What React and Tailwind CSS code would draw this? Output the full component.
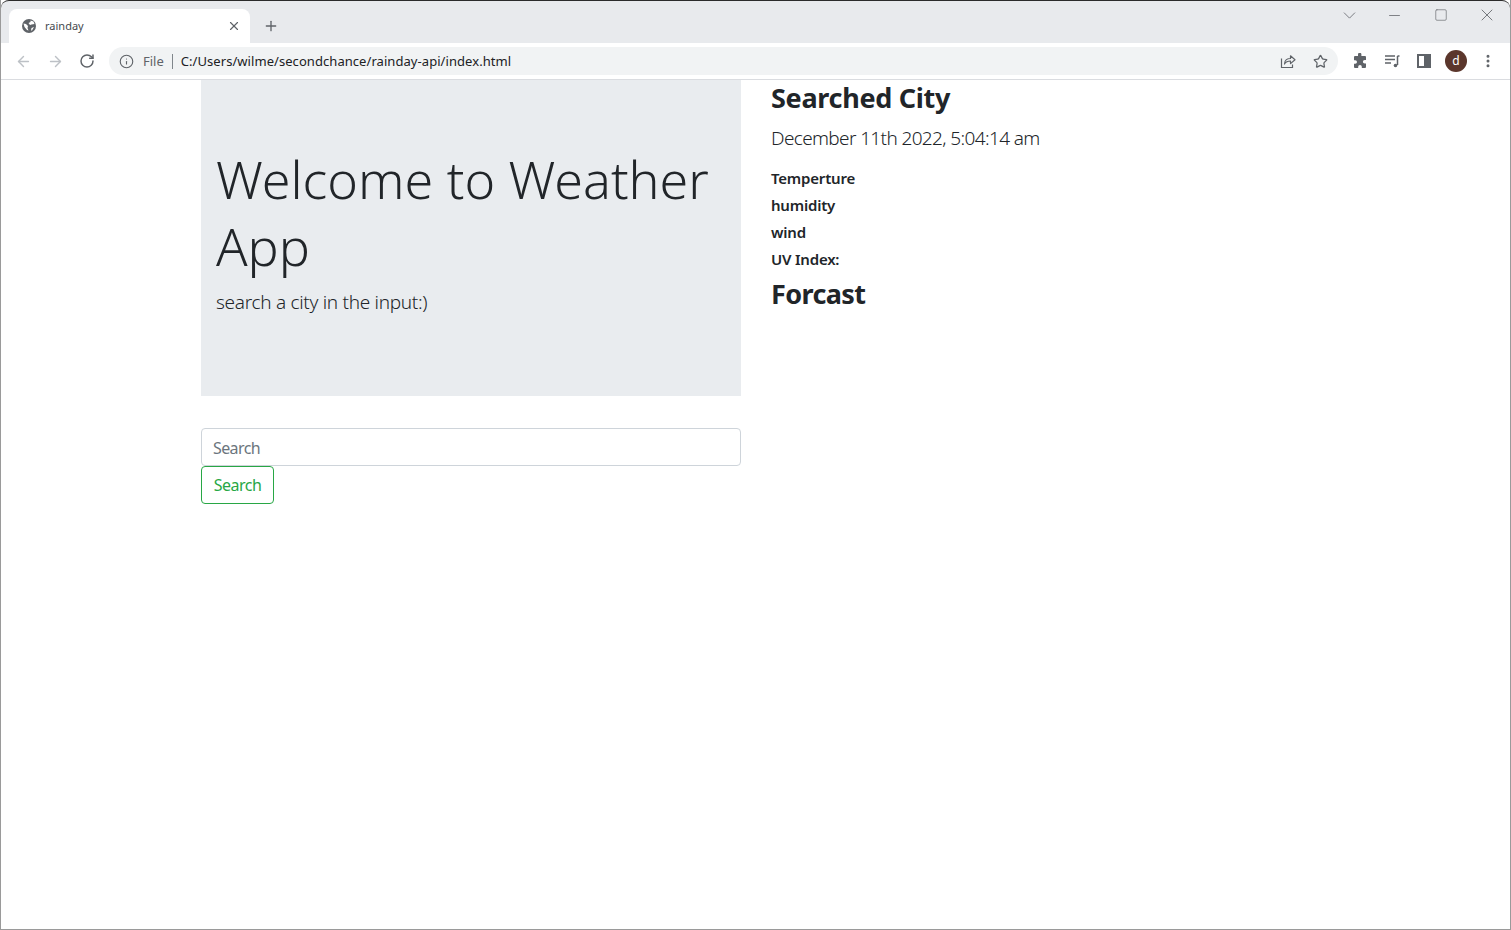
import React from 'react';
import { ArrowLeft, ArrowRight, RotateCw, Info, Star, Plus, X, Minus, Square, ChevronDown, MoreVertical } from 'lucide-react';

const font = { fontFamily: '"Noto Sans", "Open Sans", sans-serif' };

function Globe() {
  return (
    <svg width="16" height="16" viewBox="0 0 16 16" className="shrink-0">
      <circle cx="8" cy="8" r="7" fill="#5f6368" />
      <path d="M2.500 5.500l2.500.5 2 2-.5 2 1 2.500-1.500-.5-2.500-3zM9.500 2.500l3 1 1 2.500-3 .5-1.500.5-1.500-2 2-1zM10.500 10l2.500-1-2 3.500-1 0z" fill="#fff" />
    </svg>
  );
}

function ShareIcon() {
  return (
    <svg width="16" height="16" viewBox="0 0 16 16" fill="none" stroke="#5f6368" strokeWidth="1.200">
      <path d="M1.500 5.500V14.500H12.500V11.500" />
      <path d="M4.500 11c0-3.800 3-5.500 6-5.500V2.800L15 6.700l-4.500 3.900V8c-2.800 0-4.800 1-6 3z" strokeLinejoin="round" />
    </svg>
  );
}

function Puzzle() {
  return (
    <svg width="16" height="16" viewBox="0 0 16 16">
      <path d="M6 1.500a1.700 1.700 0 0 1 3.400 0V3H13a1 1 0 0 1 1 1v3h-1.300a1.800 1.800 0 0 0 0 3.600H14V14a1 1 0 0 1-1 1H9.800v-1.300a1.800 1.800 0 0 0-3.600 0V15H3a1 1 0 0 1-1-1v-3.200h1.200a1.800 1.800 0 0 0 0-3.600H2V4a1 1 0 0 1 1-1h3z" fill="#5f6368" />
    </svg>
  );
}

function MediaQueue() {
  return (
    <svg width="16" height="16" viewBox="0 0 16 16" fill="none" stroke="#5f6368" strokeWidth="1.300">
      <path d="M1 3h10M1 6.500h10M1 10h6" />
      <path d="M13.500 3v9" strokeWidth="1.500" />
      <path d="M13.500 3H15.500" strokeWidth="1.500" />
      <circle cx="11.500" cy="12.500" r="1.800" fill="#5f6368" stroke="none" />
    </svg>
  );
}

function SidePanel() {
  return (
    <div className="w-[14px] h-[14px] border-2 border-[#5f6368] flex justify-end">
      <div className="w-[5px] h-full bg-[#5f6368]" />
    </div>
  );
}

function BrowserChrome() {
  return (
    <div className="shrink-0">
      <div className="h-[43px] bg-[#e8eaed] flex items-end pl-[8px] border-t border-[#2b2b2b] rounded-t-[8px]">
        <div className="w-[241px] h-[34px] bg-white rounded-t-[8px] flex items-center pl-[12px] pr-[9px]">
          <Globe />
          <span className="ml-[8px] text-[11px] text-[#45494e] flex-1 leading-none pb-[2px]" style={font}>rainday</span>
          <X size={14} strokeWidth={2} color="#5f6368" />
        </div>
        <div className="h-[34px] flex items-center ml-[13px]">
          <Plus size={16} strokeWidth={2} color="#5f6368" />
        </div>
        <div className="flex-1 h-[28px] self-start flex justify-end items-center">
          <ChevronDown size={21} strokeWidth={1} className="mr-[26px]" color="#6b6e73" />
          <Minus size={17} strokeWidth={1.200} className="mr-[31px]" color="#6b6e73" />
          <Square size={14} strokeWidth={1.200} className="mr-[29px]" color="#6b6e73" />
          <X size={20} strokeWidth={1.100} className="mr-[13px]" color="#6b6e73" />
        </div>
      </div>
      <div className="h-[37px] bg-white border-b border-[#dadce0] flex items-center pl-[14px] pr-[14px]">
        <ArrowLeft size={17} strokeWidth={2} color="#bdc1c6" />
        <ArrowRight size={17} strokeWidth={2} color="#bdc1c6" className="ml-[15px]" />
        <RotateCw size={16} strokeWidth={2.200} color="#5f6368" className="ml-[15px]" />
        <div className="ml-[14px] w-[1230px] h-[28px] rounded-full bg-[#f1f3f4] flex items-center pl-[10px] pr-[10px]">
          <Info size={15} strokeWidth={1.800} color="#5f6368" />
          <span className="ml-[9px] text-[13px] text-[#5f6368] leading-none" style={font}>File</span>
          <span className="ml-[8px] w-px h-[15px] bg-[#80868b]" />
          <span className="ml-[8px] text-[13px] text-[#202124] leading-none flex-1 tracking-[0.06px]" style={font}>C:/Users/wilme/secondchance/rainday-api/index.html</span>
          <ShareIcon />
          <Star size={15} strokeWidth={2} color="#5f6368" className="ml-[17px]" />
        </div>
        <div className="ml-[14px] flex items-center">
          <Puzzle />
          <div className="ml-[16px]"><MediaQueue /></div>
          <div className="ml-[17px]"><SidePanel /></div>
          <div className="ml-[14px] w-[22px] h-[22px] rounded-full bg-[#5b362c] text-white text-[12px] flex items-center justify-center" style={font}>d</div>
          <MoreVertical size={16} strokeWidth={2.500} color="#5f6368" className="ml-[13px]" />
        </div>
      </div>
    </div>
  );
}

export default function App() {
  return (
    <div className="h-[930px] w-[1511px] overflow-hidden bg-white flex flex-col border-x border-b border-[#9a9a9a] text-[#212529]" style={font}>
      <BrowserChrome />
      <div className="flex pl-[200px]">
        <div className="w-[540px] shrink-0">
          <div className="h-[316px] bg-[#e9ecef] pl-[15px] pr-[16px] pt-[65px]">
            <h1 className="text-[52px] leading-[67px] font-light tracking-[0px]">Welcome to Weather App</h1>
            <p className="text-[19px] leading-[30px] font-light tracking-[-0.3px] mt-[8px]">search a city in the input:)</p>
          </div>
          <input
            placeholder="Search"
            className="mt-[32px] block w-full h-[38px] border border-[#ced4da] rounded-[4px] pl-[11px] pr-[12px] pt-[2px] text-[16px] placeholder:text-[#6c757d] tracking-[-0.6px] bg-white"
          />
          <button className="block h-[38px] w-[73px] border border-[#28a745] rounded-[4px] text-[16px] text-[#28a745] tracking-[-0.5px]">Search</button>
        </div>
        <div className="pl-[30px] pt-[1px]">
          <h2 className="text-[27px] leading-[34px] font-bold tracking-[-0.3px]">Searched City</h2>
          <p className="text-[19px] leading-[30px] font-light tracking-[-0.63px] mt-[8px]">December 11th 2022, 5:04:14 am</p>
          <div className="mt-[12px] text-[15px] leading-[27px] font-semibold tracking-[-0.2px]">
            <div>Temperture</div>
            <div>humidity</div>
            <div>wind</div>
            <div>UV Index:</div>
          </div>
          <h2 className="text-[27px] leading-[34px] font-bold tracking-[-0.6px] mt-[4px]">Forcast</h2>
        </div>
      </div>
    </div>
  );
}
